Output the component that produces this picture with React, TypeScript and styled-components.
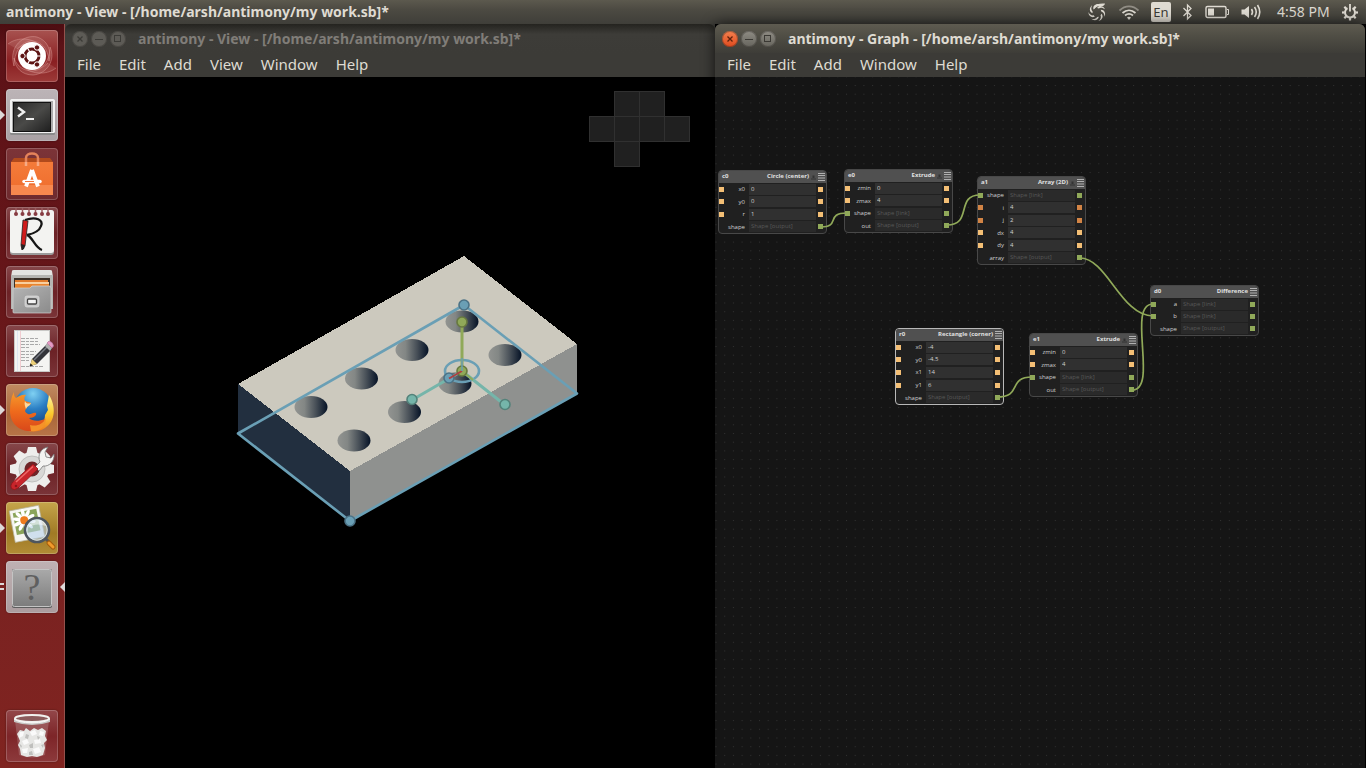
import React from "react";
import styled, { createGlobalStyle, css } from "styled-components";

const GlobalStyle = createGlobalStyle`
  * { box-sizing: border-box; }
  html, body { margin: 0; background: #000; }
  button, input { font: inherit; color: inherit; margin: 0; padding: 0; border: 0; background: none; }
`;

const uiFont = `"Noto Sans", "Open Sans", sans-serif`;
const nodeFont = `"Open Sans", "Noto Sans", sans-serif`;

const palette = {
  blue: "#6a9fb5",
  blueDark: "#4b7286",
  green: "#90a959",
  greenDark: "#67793f",
  teal: "#75b5aa",
  tealDark: "#53827a",
  red: "#ac4142",
  yellow: "#f4bf75",
  orange: "#d28445",
};

/* ---------- desktop shell ---------- */

const Screen = styled.div`
  min-height: 100vh;
  display: flex;
  flex-direction: column;
  font-family: ${uiFont};
  overflow: hidden;
`;

const TopPanel = styled.header`
  height: 24px;
  flex: none;
  display: flex;
  align-items: center;
  justify-content: space-between;
  padding: 0 8px 0 6px;
  background: linear-gradient(#5c594e, #4c4a42 40%, #3f3e39);
  color: #dfdbd2;
`;

const PanelTitle = styled.h1`
  margin: 0;
  font-size: 14px;
  line-height: 24px;
  font-weight: 700;
  white-space: nowrap;
`;

const Indicators = styled.div`
  display: flex;
  align-items: center;
  gap: 12px;
  svg { display: block; }
`;

const IndicatorButton = styled.button`
  display: block;
`;

const LanguageButton = styled.button`
  width: 20px;
  height: 20px;
  border-radius: 2px;
  background: #dfdbd2;
  color: #3c3b37;
  font-size: 13px;
  line-height: 20px;
  text-align: center;
`;

const Clock = styled.time`
  width: 53px;
  font-size: 14px;
  line-height: 24px;
  white-space: nowrap;
`;

const Workspace = styled.div`
  flex: 1;
  display: flex;
  padding-right: 1px;
`;

/* ---------- launcher ---------- */

const Launcher = styled.nav`
  width: 65px;
  flex: none;
  display: flex;
  flex-direction: column;
  gap: 7px;
  padding: 6px;
  background: linear-gradient(#4d0d11, #5c1217 3%, #661619 35%, #7a2221 75%, #802420);
  border-right: 1px solid #94514c;
`;

const Tile = styled.button<{ $bg: string; $last?: boolean }>`
  position: relative;
  width: 52px;
  height: 52px;
  flex: none;
  border-radius: 4px;
  background: ${(p) => p.$bg};
  box-shadow: inset 0 0 0 1px rgba(255, 255, 255, 0.2), 0 0 2px rgba(0, 0, 0, 0.4);
  margin-top: ${(p) => (p.$last ? "auto" : 0)};
  svg { display: block; }
`;

const Running = styled.span`
  position: absolute;
  left: -6px;
  top: 21px;
  border: 5px solid transparent;
  border-left-color: #ddd8d8;
  border-right-width: 0;
`;

const Focused = styled.span`
  position: absolute;
  right: -7px;
  top: 21px;
  border: 5px solid transparent;
  border-right-color: #ddd8d8;
  border-left-width: 0;
`;

const Pips = styled.span`
  position: absolute;
  left: -6px;
  top: 22px;
  width: 4px;
  height: 7px;
  border: solid #ddd8d8;
  border-width: 2px 0;
`;

/* ---------- windows ---------- */

const Window = styled.section<{ $active?: boolean }>`
  flex: 1;
  min-width: 0;
  display: flex;
  flex-direction: column;
  background: #3c3b37;
  ${(p) =>
    p.$active &&
    css`
      position: relative;
      border-radius: 6px 6px 0 0;
      box-shadow: 0 0 14px rgba(0, 0, 0, 0.7);
    `}
`;

const TitleBar = styled.div<{ $active?: boolean }>`
  height: 29px;
  flex: none;
  display: flex;
  align-items: center;
  padding: 0 7px;
  gap: 3px;
  border-radius: 6px 6px 0 0;
  background: ${(p) =>
    p.$active ? "linear-gradient(#5e5b50, #504e45 40%, #3e3d38)" : "linear-gradient(#24231f, #3d3c38 35%, #3c3b37)"};
  color: ${(p) => (p.$active ? "#dfdbd2" : "#807d78")};
`;

const WindowTitle = styled.h2`
  margin: 0 0 0 9px;
  font-size: 14px;
  line-height: 29px;
  font-weight: 700;
  white-space: nowrap;
`;

const WindowButton = styled.button<{ $tone: "close" | "active" | "idle" }>`
  width: 16px;
  height: 16px;
  border-radius: 50%;
  background: ${(p) =>
    p.$tone === "close"
      ? "linear-gradient(#f4814f, #df4a1e)"
      : p.$tone === "active"
        ? "linear-gradient(#8f8c84, #66645d)"
        : "#5d5b56"};
  box-shadow: inset 0 0 0 1px rgba(40, 38, 34, 0.35);
  svg { display: block; }
`;

const MenuBar = styled.nav`
  height: 24px;
  flex: none;
  display: flex;
  align-items: flex-start;
  padding: 0 12px;
  gap: 18px;
`;

const MenuButton = styled.button`
  font-size: 15px;
  line-height: 22px;
  color: #dfdbd2;
`;

/* ---------- 3D view ---------- */

const Viewport = styled.div`
  position: relative;
  flex: 1;
  background: #000;
`;

const Scene = styled.svg`
  position: absolute;
  inset: 0;
  width: 100%;
  height: 100%;
`;

const AxisPad = styled.div`
  position: absolute;
  top: 14px;
  right: 26px;
  display: grid;
  grid-template-columns: repeat(4, 25px);
  grid-auto-rows: 25px;
`;

const AxisCell = styled.button<{ $col: number; $row: number }>`
  grid-column: ${(p) => p.$col};
  grid-row: ${(p) => p.$row};
  width: 26px;
  height: 26px;
  background: #202020;
  border: 1px solid #303030;
`;

/* ---------- graph ---------- */

const GraphCanvas = styled.div`
  position: relative;
  flex: 1;
  background: #151515;
  overflow: hidden;
`;

const CanvasLayer = styled.svg`
  position: absolute;
  inset: 0;
  width: 100%;
  height: 100%;
  pointer-events: none;
`;

const NodeCard = styled.article<{ $x: number; $y: number; $h: number; $selected?: boolean }>`
  position: absolute;
  left: ${(p) => p.$x}px;
  top: ${(p) => p.$y}px;
  width: 109px;
  height: ${(p) => p.$h}px;
  display: flex;
  flex-direction: column;
  border: 1px solid ${(p) => (p.$selected ? "#b8b8b8" : "#484848")};
  border-radius: 4px;
  background: #202020;
  font-family: ${nodeFont};
  font-size: 6px;
  color: #d0d0d0;
`;

const NodeHeader = styled.header`
  height: 12px;
  flex: none;
  display: flex;
  align-items: center;
  gap: 2px;
  padding: 0 1px 1px 3px;
  border-radius: 3px 3px 0 0;
  background: #505050;
  font-weight: 700;
  line-height: 11px;
  color: #e0e0e0;
  svg { display: block; }
`;

const NodeId = styled.span`
  margin-right: auto;
`;

const NodeBody = styled.div`
  flex: 1;
  display: grid;
  grid-auto-rows: 1fr;
`;

const NodeRow = styled.div`
  display: grid;
  grid-template-columns: 5px 21px 67px 5px;
  align-items: center;
`;

const Port = styled.span<{ $color?: string }>`
  width: 5px;
  height: 5px;
  background: ${(p) => p.$color ?? "transparent"};
  &:last-child { margin-left: 6px; }
`;

const RowLabel = styled.label`
  text-align: right;
  white-space: nowrap;
`;

const RowField = styled.input<{ $hint: boolean }>`
  width: 67px;
  height: 11px;
  margin-left: 4px;
  padding: 0 2px;
  background: ${(p) => (p.$hint ? "#2a2a2a" : "#303030")};
  color: ${(p) => (p.$hint ? "#585858" : "#d0d0d0")};
  line-height: 11px;
`;

/* ---------- data ---------- */

type Row = { label: string; value: string; left?: string; right: string; hint?: boolean };
type NodeData = {
  id: string;
  title: string;
  x: number;
  y: number;
  h: number;
  rows: Row[];
  eject?: boolean;
  selected?: boolean;
};

const num = (label: string, value: string): Row => ({ label, value, left: palette.yellow, right: palette.yellow });
const int = (label: string, value: string): Row => ({ label, value, left: palette.orange, right: palette.orange });
const link = (label: string): Row => ({
  label,
  value: "Shape [link]",
  left: palette.green,
  right: palette.green,
  hint: true,
});
const out = (label: string): Row => ({ label, value: "Shape [output]", right: palette.green, hint: true });

const nodes: NodeData[] = [
  { id: "c0", title: "Circle (center)", x: 3, y: 93, h: 64, eject: true, rows: [num("x0", "0"), num("y0", "0"), num("r", "1"), out("shape")] },
  { id: "e0", title: "Extrude", x: 129, y: 92, h: 64, eject: true, rows: [num("zmin", "0"), num("zmax", "4"), link("shape"), out("out")] },
  { id: "a1", title: "Array (2D)", x: 262, y: 99, h: 89, eject: true, rows: [link("shape"), int("i", "4"), int("j", "2"), num("dx", "4"), num("dy", "4"), out("array")] },
  { id: "r0", title: "Rectangle (corner)", x: 180, y: 251, h: 77, selected: true, rows: [num("x0", "-4"), num("y0", "-4.5"), num("x1", "14"), num("y1", "6"), out("shape")] },
  { id: "e1", title: "Extrude", x: 314, y: 256, h: 64, eject: true, rows: [num("zmin", "0"), num("zmax", "4"), link("shape"), out("out")] },
  { id: "d0", title: "Difference", x: 435, y: 208, h: 51, rows: [link("a"), link("b"), out("shape")] },
];

const wires = [
  "M106 150C126 150 110 136 132 136",
  "M232 148C258 148 240 118 265 118",
  "M365 181C392 181 406 239 438 239",
  "M282 320C308 320 292 300 317 300",
  "M417 313C444 313 411 227 438 227",
];

const axisCells: [number, number, string][] = [
  [2, 1, "Top"],
  [3, 1, "Back"],
  [1, 2, "Left"],
  [2, 2, "Front"],
  [3, 2, "Right"],
  [4, 2, "Rear"],
  [2, 3, "Bottom"],
];

const holes: [number, number][] = [
  [462, 321.5],
  [412, 350],
  [361.5, 378.5],
  [311, 407],
  [505, 355],
  [455, 383.5],
  [404.5, 412],
  [354, 440.5],
];

/* ---------- launcher icons ---------- */

const DashIcon = () => (
  <svg width="52" height="52" viewBox="0 0 52 52">
    <g fill="#f0c4c0" fillOpacity=".14" stroke="#e7a9a5" strokeOpacity=".4">
      <path d="M8 36C2 16 18 4 31 7C41 10 46 20 43 31C42 18 35 11 25 11C15 12 8 22 8 36Z" />
      <path d="M2 14C12 6 28 8 36 17C30 12 18 12 11 19" />
      <path d="M44 17C50 30 41 44 27 45C16 45 9 38 8 28C12 38 19 41 27 41C37 40 44 30 44 17Z" />
      <path d="M50 38C40 46 24 44 16 36C22 41 34 41 42 33" />
    </g>
    <circle cx="26" cy="26" r="14" fill="#fff" />
    <circle cx="26" cy="26" r="7" fill="none" stroke="#5d1414" strokeWidth="3" />
    <path d="M26 26H36M26 26L21 17M26 26L21 35" stroke="#fff" strokeWidth="1.200" />
    <circle cx="26" cy="26" r="5" fill="#fff" />
    <g fill="#5d1414" stroke="#fff" strokeWidth="1">
      <circle cx="16.500" cy="26" r="2.700" />
      <circle cx="31" cy="17.500" r="2.700" />
      <circle cx="31" cy="34.500" r="2.700" />
    </g>
  </svg>
);

const TerminalIcon = () => (
  <svg width="52" height="52" viewBox="0 0 52 52">
    <defs>
      <linearGradient id="term" x2="1" y2="1">
        <stop offset="0" stopColor="#2b2b2b" />
        <stop offset=".5" stopColor="#4a4a48" />
        <stop offset="1" stopColor="#202020" />
      </linearGradient>
    </defs>
    <rect x="4" y="10" width="45" height="36" rx="1.500" fill="#8a8a8a" />
    <rect x="4" y="10" width="45" height="34" rx="1.500" fill="#f2f2f2" />
    <rect x="6" y="12" width="41" height="31" fill="#aaa" />
    <rect x="7" y="13" width="38" height="30" fill="#111" />
    <rect x="8" y="14" width="36" height="28" fill="url(#term)" />
    <path d="M12 18.500L18 23L12 27.500" fill="none" stroke="#f0f0f0" strokeWidth="2.400" />
    <path d="M20 30H28" stroke="#f0f0f0" strokeWidth="2" />
  </svg>
);

const SoftwareIcon = () => (
  <svg width="52" height="52" viewBox="0 0 52 52">
    <defs>
      <linearGradient id="bag" x2="0" y2="1">
        <stop offset="0" stopColor="#f47b3a" />
        <stop offset="1" stopColor="#ee6c2c" />
      </linearGradient>
    </defs>
    <path d="M5 14L8 10H44L47 14Z" fill="#b14a1c" />
    <path d="M20 17V10C20 4 32 4 32 10V17" fill="none" stroke="#e5835a" strokeWidth="2.500" />
    <rect x="5" y="14" width="42" height="33" fill="url(#bag)" />
    <rect x="5" y="37" width="42" height="10" fill="#f7884e" />
    <path d="M20 14V18M32 14V18" stroke="#f6ab86" strokeWidth="2.500" />
    <path d="M26 22L20 38.500M26 22L32 38.500" stroke="#fff" strokeWidth="3.800" fill="none" />
    <path d="M18 33.500H34" stroke="#fff" strokeWidth="3.500" strokeLinecap="round" />
    <path d="M19 33.500H28" stroke="#f1753a" strokeWidth="1" />
  </svg>
);

const SketchPadIcon = () => (
  <svg width="52" height="52" viewBox="0 0 52 52">
    <rect x="4" y="3" width="44" height="45" rx="3" fill="#9b9b9b" />
    <rect x="4" y="3" width="44" height="43" rx="3" fill="#f3f3f1" />
    <path d="M10 1V6M16.500 1V6M23 1V6M29.500 1V6M36 1V6M42 1V6" stroke="#9b5a5e" strokeWidth="1.500" />
    <g fill="#873c42">
      {[10, 16.5, 23, 29.5, 36, 42].map((x) => (
        <circle key={x} cx={x} cy="7" r="2" />
      ))}
    </g>
    <path d="M19 13C30 9 38 13 35 19C33 25 26 27 21 28C26 29 29 41 36 43" fill="none" stroke="#161616" strokeWidth="2.300" />
    <path d="M17 13L22 14L19 39L16 43L15 38Z" fill="#cf1b1b" stroke="#222" strokeWidth=".8" />
    <path d="M15 37L19 38L18 42L16 43Z" fill="#222" />
  </svg>
);

const FilesIcon = () => (
  <svg width="52" height="52" viewBox="0 0 52 52">
    <defs>
      <linearGradient id="drawer" x2="1" y2="1">
        <stop offset="0" stopColor="#b5b5b5" />
        <stop offset="1" stopColor="#8b8b8b" />
      </linearGradient>
    </defs>
    <path d="M6 5Q6 4 8 4H44Q46 4 46 5L47 11H5Z" fill="#e4e4e2" />
    <path d="M5 9H47V43H5Z" fill="#b5b5b2" />
    <rect x="8" y="12" width="36" height="10" fill="#3b3028" />
    <rect x="9" y="14" width="33" height="3" fill="#e07a2a" />
    <rect x="9" y="16" width="34" height="2" fill="#f9cf9e" />
    <rect x="9" y="18" width="34" height="4" fill="#e8842e" />
    <path d="M7 22H24L26 20H44L45 22V46Q45 47 44 47H8Q7 47 7 46Z" fill="url(#drawer)" stroke="#d2d2d2" strokeWidth=".7" />
    <rect x="19" y="30" width="14" height="11" rx="2" fill="#c9c9c9" stroke="#dedede" strokeWidth=".7" />
    <rect x="21.500" y="33" width="9" height="5" rx="1" fill="#f4f4f4" stroke="#444" strokeWidth="1.300" />
  </svg>
);

const EditorIcon = () => (
  <svg width="52" height="52" viewBox="0 0 52 52">
    <rect x="8.500" y="5.500" width="35" height="41" fill="#f4f4f2" stroke="#c9c9c7" />
    <path d="M14.500 6V46" stroke="#f0ccd0" />
    <path d="M11.500 6V46" stroke="#dfe6f2" />
    <g stroke="#a9a9a9" strokeWidth="1" strokeDasharray="4 1 3 1">
      <path d="M15 13.500H33M15 16.500H32M15 19.500H34M15 22.500H23M15 26.500H30M15 29.500H28M15 32.500H24M15 35.500H24M15 41.500H38" />
    </g>
    <path d="M24 41L26 34L41 19L46 24L31 39Z" fill="#33343a" />
    <path d="M28 35L42 21" stroke="#777a82" strokeWidth="1.500" />
    <path d="M24 41L26 34L31 39Z" fill="#ecd078" />
    <path d="M23.500 41.500L24.500 38.500L27 40.500Z" fill="#222" />
    <path d="M39 21L41 18L46 23L44 26Z" fill="#b0b0b0" />
    <path d="M41 18L43 16Q47 17 47.500 21L46 23Z" fill="#e79bc4" stroke="#b478a0" strokeWidth=".7" />
  </svg>
);

const BrowserIcon = () => (
  <svg width="52" height="52" viewBox="0 0 52 52">
    <defs>
      <radialGradient id="globe" cx=".5" cy=".15" r=".9">
        <stop offset="0" stopColor="#7fd0f2" />
        <stop offset=".45" stopColor="#2b7fc4" />
        <stop offset="1" stopColor="#123a78" />
      </radialGradient>
      <linearGradient id="fox" x2="0" y2="1">
        <stop offset="0" stopColor="#f59a2c" />
        <stop offset=".5" stopColor="#ee6a1c" />
        <stop offset="1" stopColor="#d9481a" />
      </linearGradient>
      <linearGradient id="tail" x2="0" y2="1">
        <stop offset="0" stopColor="#fff6a0" />
        <stop offset=".5" stopColor="#fbcb2f" />
        <stop offset="1" stopColor="#ef7a1c" />
      </linearGradient>
    </defs>
    <circle cx="27" cy="23" r="19" fill="url(#globe)" />
    <path d="M43 11C50 22 50 37 39 44C33 48 27 48 22 47C34 46 39 38 39 31L42 26L41 22Z" fill="url(#tail)" />
    <path d="M8 8C8 11 8 12 10 14C13 12 17 10 20 11C18 13 18 15 19 17C21 18 24 18 25 19C25 21 21 22 20 25C18 27 20 29 22 30C25 31 27 28 30 29C31 31 28 34 23 34C26 37 32 38 39 35C37 42 33 47 26 47C13 48 4 39 4 27C4 20 5 13 8 8Z" fill="url(#fox)" />
    <path d="M24 41C31 43 37 40 40 34C40 43 33 48 25 47Z" fill="#f5922a" />
    <path d="M19 17C20 20 23 20 25 19C24 22 21 22 20 25C19 22 18 20 19 17Z" fill="#fbd9a0" />
  </svg>
);

const SettingsIcon = () => (
  <svg width="52" height="52" viewBox="0 0 52 52">
    <g fill="#eeeeec">
      {[0, 45, 90, 135, 180, 225, 270, 315].map((a) => (
        <path key={a} d="M22 4H30L32 12H20Z" transform={`rotate(${a} 26 26)`} />
      ))}
      <circle cx="26" cy="26" r="17" />
    </g>
    <circle cx="26" cy="26" r="13" fill="#d8d8d6" stroke="#c0c0be" />
    <circle cx="26" cy="26" r="7.500" fill="#6d2427" />
    <path d="M29 24L34 19C31 12 35 5 42 4L39 9L40 14L45 15L48 11C49 18 43 24 37 23L33 28Z" fill="#f4f4f2" stroke="#777" strokeWidth=".8" />
    <path d="M6 40L27 21L32 26L12 45Q8 48 5.500 45.500Q4 43 6 40Z" fill="#c8252b" stroke="#8e1519" strokeWidth=".8" />
    <path d="M10 39L27 23.500" stroke="#ee6a68" strokeWidth="1.500" />
    <circle cx="10" cy="43" r="1.300" fill="#8e1519" />
  </svg>
);

const ImageViewerIcon = () => (
  <svg width="52" height="52" viewBox="0 0 52 52">
    <g transform="rotate(-11 20 22)">
      <rect x="6" y="6" width="30" height="32" fill="#f6f6f2" stroke="#b5b29b" strokeWidth=".7" />
      <rect x="9" y="9" width="24" height="22" fill="#8ba55b" />
      <g fill="#fff">
        {[0, 36, 72, 108, 144, 180, 216, 252, 288, 324].map((a) => (
          <ellipse key={a} cx="19" cy="11" rx="1.800" ry="4.500" transform={`rotate(${a} 19 18)`} />
        ))}
      </g>
      <circle cx="19" cy="18" r="4" fill="#ee7b1d" />
    </g>
    <circle cx="31" cy="28" r="12" fill="#b8d2ea" fillOpacity=".6" stroke="#4e565e" strokeWidth="2.600" />
    <circle cx="31" cy="28" r="10.200" fill="none" stroke="#e3edf4" strokeWidth=".8" />
    <path d="M22 26Q29 20 40 24Q39 19 32 18Q25 18 22 26Z" fill="#fff" fillOpacity=".5" />
    <path d="M40 37L43 40" stroke="#555" strokeWidth="3" />
    <path d="M43 41L47 45" stroke="#a55c0a" strokeWidth="5" strokeLinecap="round" />
    <path d="M43 41L47 45" stroke="#f09a2b" strokeWidth="3" strokeLinecap="round" />
  </svg>
);

const UnknownIcon = () => (
  <svg width="52" height="52" viewBox="0 0 52 52">
    <defs>
      <linearGradient id="unk" x2="0" y2="1">
        <stop offset="0" stopColor="#a9a9a9" />
        <stop offset="1" stopColor="#7c7c7c" />
      </linearGradient>
    </defs>
    <rect x="6" y="8" width="40" height="39" rx="2" fill="#5e5e5e" />
    <rect x="6.500" y="8.500" width="39" height="37" rx="2" fill="url(#unk)" stroke="#c4c4c4" />
    <text x="26" y="39" textAnchor="middle" fontFamily="Liberation Serif, serif" fontSize="38" fill="#5f5f5f">
      ?
    </text>
  </svg>
);

const TrashIcon = () => (
  <svg width="52" height="52" viewBox="0 0 52 52">
    <path d="M9 10L13 45Q26 50 39 45L43 10Z" fill="#d9c5c5" fillOpacity=".25" />
    <path
      d="M11 24L14 20L18 21L20 18L24 21L28 18L32 20L36 18L40 21L39 26L41 30L38 33L39 38L37 45L31 47L26 46L21 47L15 45L14 39L12 35L14 31Z"
      fill="#e6e6e4"
    />
    <g fill="#fafafa">
      <path d="M14 22L18 22L17 26L13 28ZM24 22L29 20L31 24L26 26ZM34 21L38 22L37 26L33 25ZM16 31L21 29L23 33L18 35ZM28 30L34 29L35 33L29 34ZM16 39L22 38L21 43L17 43ZM27 39L33 37L35 42L29 44Z" />
    </g>
    <g fill="#bfbfbd">
      <path d="M20 24L23 25L22 29L19 28ZM31 26L34 27L32 30ZM13 33L16 36L15 38ZM23 35L27 33L27 38L24 38ZM35 35L38 34L37 38ZM23 42L26 41L27 45L23 45Z" />
    </g>
    <ellipse cx="26" cy="8.500" rx="17" ry="3.500" fill="#8b5b5c" stroke="#f1f1ef" strokeWidth="2" />
    <path d="M8 9V12Q26 18 44 12V9Q40 12.500 26 13Q12 12.500 8 9Z" fill="#c6c6c4" />
    <path d="M8 9Q12 12.500 26 13Q40 12.500 44 9" fill="none" stroke="#fafafa" />
  </svg>
);

const glass = "linear-gradient(#86474a, #6c2226 50%, #7a3438)";

const launcherItems = [
  { name: "Dash", bg: "linear-gradient(#a85350, #8a1f22 60%, #9c3a38)", Icon: DashIcon },
  { name: "Terminal", bg: "linear-gradient(#bcb4b7, #a9a1a4)", Icon: TerminalIcon, mark: "run" },
  { name: "Software Center", bg: "linear-gradient(#7c3438, #6e2a2e)", Icon: SoftwareIcon },
  { name: "Sketch Pad", bg: glass, Icon: SketchPadIcon },
  { name: "Files", bg: glass, Icon: FilesIcon },
  { name: "Text Editor", bg: glass, Icon: EditorIcon },
  { name: "Firefox", bg: "linear-gradient(#c08a61, #a9663a 60%, #b87548)", Icon: BrowserIcon, mark: "run" },
  { name: "System Settings", bg: glass, Icon: SettingsIcon },
  { name: "Image Viewer", bg: "linear-gradient(#c5a54b, #a07a25 60%, #b18c36)", Icon: ImageViewerIcon, mark: "run" },
  { name: "antimony", bg: "linear-gradient(#bfb1b3, #ab9c9e)", Icon: UnknownIcon, mark: "focus" },
];

/* ---------- panel icons ---------- */

const tone = "#dfdbd2";

const ShutterIcon = () => (
  <svg width="20" height="20" viewBox="0 0 20 20" fill={tone}>
    {[0, 51, 103, 154, 206, 257, 309].map((a) => (
      <path key={a} d="M6.500 7.500C5.500 4 8.500 1.500 12.500 2.200C9.800 2.800 8 4.500 8 6.500Z" transform={`rotate(${a} 10 10.500)`} />
    ))}
    <path d="M7 5C9 2 13 1 18 1.500C17.500 3.500 16 4.200 14 4C12 3.600 9.500 4.200 8.500 6Z" />
  </svg>
);

const WifiIcon = () => (
  <svg width="20" height="20" viewBox="0 0 20 20" fill="none" stroke={tone} strokeWidth="1.800">
    <path d="M0.500 8.500C6 3 14 3 19.500 8.500" strokeOpacity=".45" />
    <path d="M3.500 11C7.500 7.500 12.500 7.500 16.500 11" />
    <path d="M6 13.500C8.500 11.500 11.500 11.500 14 13.500" />
    <path d="M8 15.500Q10 14 12 15.500L10 18Z" fill={tone} stroke="none" />
  </svg>
);

const BluetoothIcon = () => (
  <svg width="10" height="20" viewBox="0 0 10 20" fill="none" stroke={tone} strokeWidth="1.300">
    <path d="M0.500 6L8 13.500L4.500 17V3L8 6.500L0.500 14" />
  </svg>
);

const BatteryIcon = () => (
  <svg width="24" height="20" viewBox="0 0 24 20">
    <rect x="1" y="4.500" width="20" height="11" rx="1.500" fill="none" stroke={tone} strokeWidth="1.400" />
    <rect x="3" y="6.500" width="6" height="7" fill={tone} />
    <path d="M22 7.500H23.500V12.500H22" fill="none" stroke={tone} />
  </svg>
);

const VolumeIcon = () => (
  <svg width="24" height="20" viewBox="0 0 24 20" fill="none" stroke={tone} strokeWidth="1.600">
    <path d="M0.500 7.500H3.500L8 4V16L3.500 12.500H0.500Z" fill={tone} stroke="none" />
    <path d="M10.500 7Q12.500 10 10.500 13" />
    <path d="M13.500 5Q17 10 13.500 15" />
    <path d="M16.500 3Q21 10 16.500 17" />
  </svg>
);

const SessionIcon = () => (
  <svg width="16" height="20" viewBox="0 0 16 20" fill="none" stroke={tone}>
    <path d="M5.500 6.200A5 5 0 1 0 10.500 6.200" strokeWidth="2" />
    <path d="M8 2V9.500" strokeWidth="1.800" />
    <g strokeWidth="2.200">
      {[45, 90, 135, 180, 225, 270, 315].map((a) => (
        <path key={a} d="M8 2.500V5" transform={`rotate(${a} 8 10.500)`} />
      ))}
    </g>
  </svg>
);

/* ---------- components ---------- */

const WindowControls = ({ active }: { active?: boolean }) => {
  const ink = active ? "#3b3934" : "#3c3b37";
  return (
    <>
      <WindowButton $tone={active ? "close" : "idle"} aria-label="Close">
        <svg width="16" height="16" viewBox="0 0 16 16" stroke={active ? "#5e210d" : ink} strokeWidth="1.300">
          <path d="M5.500 5.500L10.500 10.500M10.500 5.500L5.500 10.500" />
        </svg>
      </WindowButton>
      <WindowButton $tone={active ? "active" : "idle"} aria-label="Minimize">
        <svg width="16" height="16" viewBox="0 0 16 16" stroke={ink}>
          <path d="M4 8.500H12" />
        </svg>
      </WindowButton>
      <WindowButton $tone={active ? "active" : "idle"} aria-label="Maximize">
        <svg width="16" height="16" viewBox="0 0 16 16" stroke={ink} fill="none">
          <rect x="4.500" y="4.500" width="6" height="6" />
        </svg>
      </WindowButton>
    </>
  );
};

const Menus = ({ items }: { items: string[] }) => (
  <MenuBar>
    {items.map((item) => (
      <MenuButton key={item}>{item}</MenuButton>
    ))}
  </MenuBar>
);

const Handle = ({ x, y, fill, rim }: { x: number; y: number; fill: string; rim: string }) => (
  <circle cx={x} cy={y} r="5" fill={fill} stroke={rim} strokeWidth="1.600" />
);

const Model = () => (
  <Scene viewBox="65 77 650 691" role="img" aria-label="Block with eight holes">
    <defs>
      <linearGradient id="hole">
        <stop offset="0" stopColor="#929491" />
        <stop offset=".3" stopColor="#838785" />
        <stop offset=".65" stopColor="#474f57" />
        <stop offset="1" stopColor="#051226" />
      </linearGradient>
    </defs>
    <g shapeRendering="crispEdges">
      <path d="M464 256L577 344L350 471L238 384Z" fill="#ccc9be" />
      <path d="M238 384L350 471V521L238 434Z" fill="#222f3f" />
      <path d="M350 471L577 344V394L350 521Z" fill="#8f918f" />
    </g>
    {holes.map(([x, y]) => (
      <ellipse key={`${x}-${y}`} cx={x} cy={y} rx="16.500" ry="11" fill="url(#hole)" />
    ))}
    <path d="M464 305L238 433.500L350 521L577 393.500Z" fill="none" stroke={palette.blue} strokeWidth="2.600" strokeLinejoin="round" />
    <ellipse cx="462" cy="371" rx="17" ry="11" fill="none" stroke={palette.blue} strokeWidth="2.600" />
    <path d="M462 371L412 400M462 371L505 405" stroke={palette.teal} strokeWidth="3" />
    <path d="M462 322V371" stroke={palette.green} strokeWidth="3" />
    <path d="M462 371L473 380" stroke={palette.green} strokeWidth="2" />
    <Handle x={449} y={378} fill={palette.blue} rim={palette.blueDark} />
    <Handle x={462} y={371} fill={palette.green} rim={palette.greenDark} />
    <path d="M462 371L449 378.500" stroke={palette.red} strokeWidth="2" />
    <path d="M462 358V371" stroke={palette.blue} strokeWidth="1.500" />
    <Handle x={464} y={305} fill={palette.blue} rim={palette.blueDark} />
    <Handle x={350} y={521} fill={palette.blue} rim={palette.blueDark} />
    <Handle x={462} y={322} fill={palette.green} rim={palette.greenDark} />
    <Handle x={412} y={399.5} fill={palette.teal} rim={palette.tealDark} />
    <Handle x={505} y={404.5} fill={palette.teal} rim={palette.tealDark} />
  </Scene>
);

const GraphNode = ({ node }: { node: NodeData }) => (
  <NodeCard $x={node.x} $y={node.y} $h={node.h} $selected={node.selected}>
    <NodeHeader>
      <NodeId>{node.id}</NodeId>
      <span>{node.title}</span>
      {node.eject && (
        <svg width="5" height="6" viewBox="0 0 5 6" fill="#333">
          <path d="M0 4.500H5V5.500H0ZM1.500 1.500H3.500V4H1.500Z" />
        </svg>
      )}
      <svg width="7" height="8" viewBox="0 0 7 8" fill="#b0b0b0">
        <path d="M0 0H7V1H0ZM0 2H7V3H0ZM0 4.500H7V5.500H0ZM0 7H7V8H0Z" />
      </svg>
    </NodeHeader>
    <NodeBody>
      {node.rows.map((row) => {
        const fieldId = `${node.id}-${row.label}`;
        return (
          <NodeRow key={row.label}>
            <Port $color={row.left} />
            <RowLabel htmlFor={fieldId}>{row.label}</RowLabel>
            <RowField id={fieldId} $hint={!!row.hint} defaultValue={row.value} readOnly={row.hint} />
            <Port $color={row.right} />
          </NodeRow>
        );
      })}
    </NodeBody>
  </NodeCard>
);

export default function App() {
  return (
    <Screen>
      <GlobalStyle />
      <TopPanel>
        <PanelTitle>antimony - View - [/home/arsh/antimony/my work.sb]*</PanelTitle>
        <Indicators>
          <IndicatorButton aria-label="Shutter"><ShutterIcon /></IndicatorButton>
          <IndicatorButton aria-label="Network"><WifiIcon /></IndicatorButton>
          <LanguageButton>En</LanguageButton>
          <IndicatorButton aria-label="Bluetooth"><BluetoothIcon /></IndicatorButton>
          <IndicatorButton aria-label="Battery"><BatteryIcon /></IndicatorButton>
          <IndicatorButton aria-label="Sound"><VolumeIcon /></IndicatorButton>
          <Clock>4:58 PM</Clock>
          <IndicatorButton aria-label="Session"><SessionIcon /></IndicatorButton>
        </Indicators>
      </TopPanel>
      <Workspace>
        <Launcher>
          {launcherItems.map(({ name, bg, Icon, mark }) => (
            <Tile key={name} $bg={bg} aria-label={name}>
              <Icon />
              {mark === "run" && <Running />}
              {mark === "focus" && <Pips />}
              {mark === "focus" && <Focused />}
            </Tile>
          ))}
          <Tile $bg="linear-gradient(#93474a, #7d2528 50%, #8d3a3c)" $last aria-label="Trash">
            <TrashIcon />
          </Tile>
        </Launcher>
        <Window>
          <TitleBar>
            <WindowControls />
            <WindowTitle>antimony - View - [/home/arsh/antimony/my work.sb]*</WindowTitle>
          </TitleBar>
          <Menus items={["File", "Edit", "Add", "View", "Window", "Help"]} />
          <Viewport>
            <Model />
            <AxisPad>
              {axisCells.map(([col, row, name]) => (
                <AxisCell key={name} $col={col} $row={row} aria-label={name} />
              ))}
            </AxisPad>
          </Viewport>
        </Window>
        <Window $active>
          <TitleBar $active>
            <WindowControls active />
            <WindowTitle>antimony - Graph - [/home/arsh/antimony/my work.sb]*</WindowTitle>
          </TitleBar>
          <Menus items={["File", "Edit", "Add", "Window", "Help"]} />
          <GraphCanvas>
            <CanvasLayer>
              <defs>
                <pattern id="dots" width="8.700" height="8.700" patternUnits="userSpaceOnUse" x="0.500" y="8">
                  <rect width="1" height="1" fill="#323232" />
                </pattern>
              </defs>
              <rect width="100%" height="100%" fill="url(#dots)" />
            </CanvasLayer>
            {nodes.map((node) => (
              <GraphNode key={node.id} node={node} />
            ))}
            <CanvasLayer fill="none" stroke={palette.green} strokeWidth="1.700">
              {wires.map((d) => (
                <path key={d} d={d} />
              ))}
            </CanvasLayer>
          </GraphCanvas>
        </Window>
      </Workspace>
    </Screen>
  );
}
